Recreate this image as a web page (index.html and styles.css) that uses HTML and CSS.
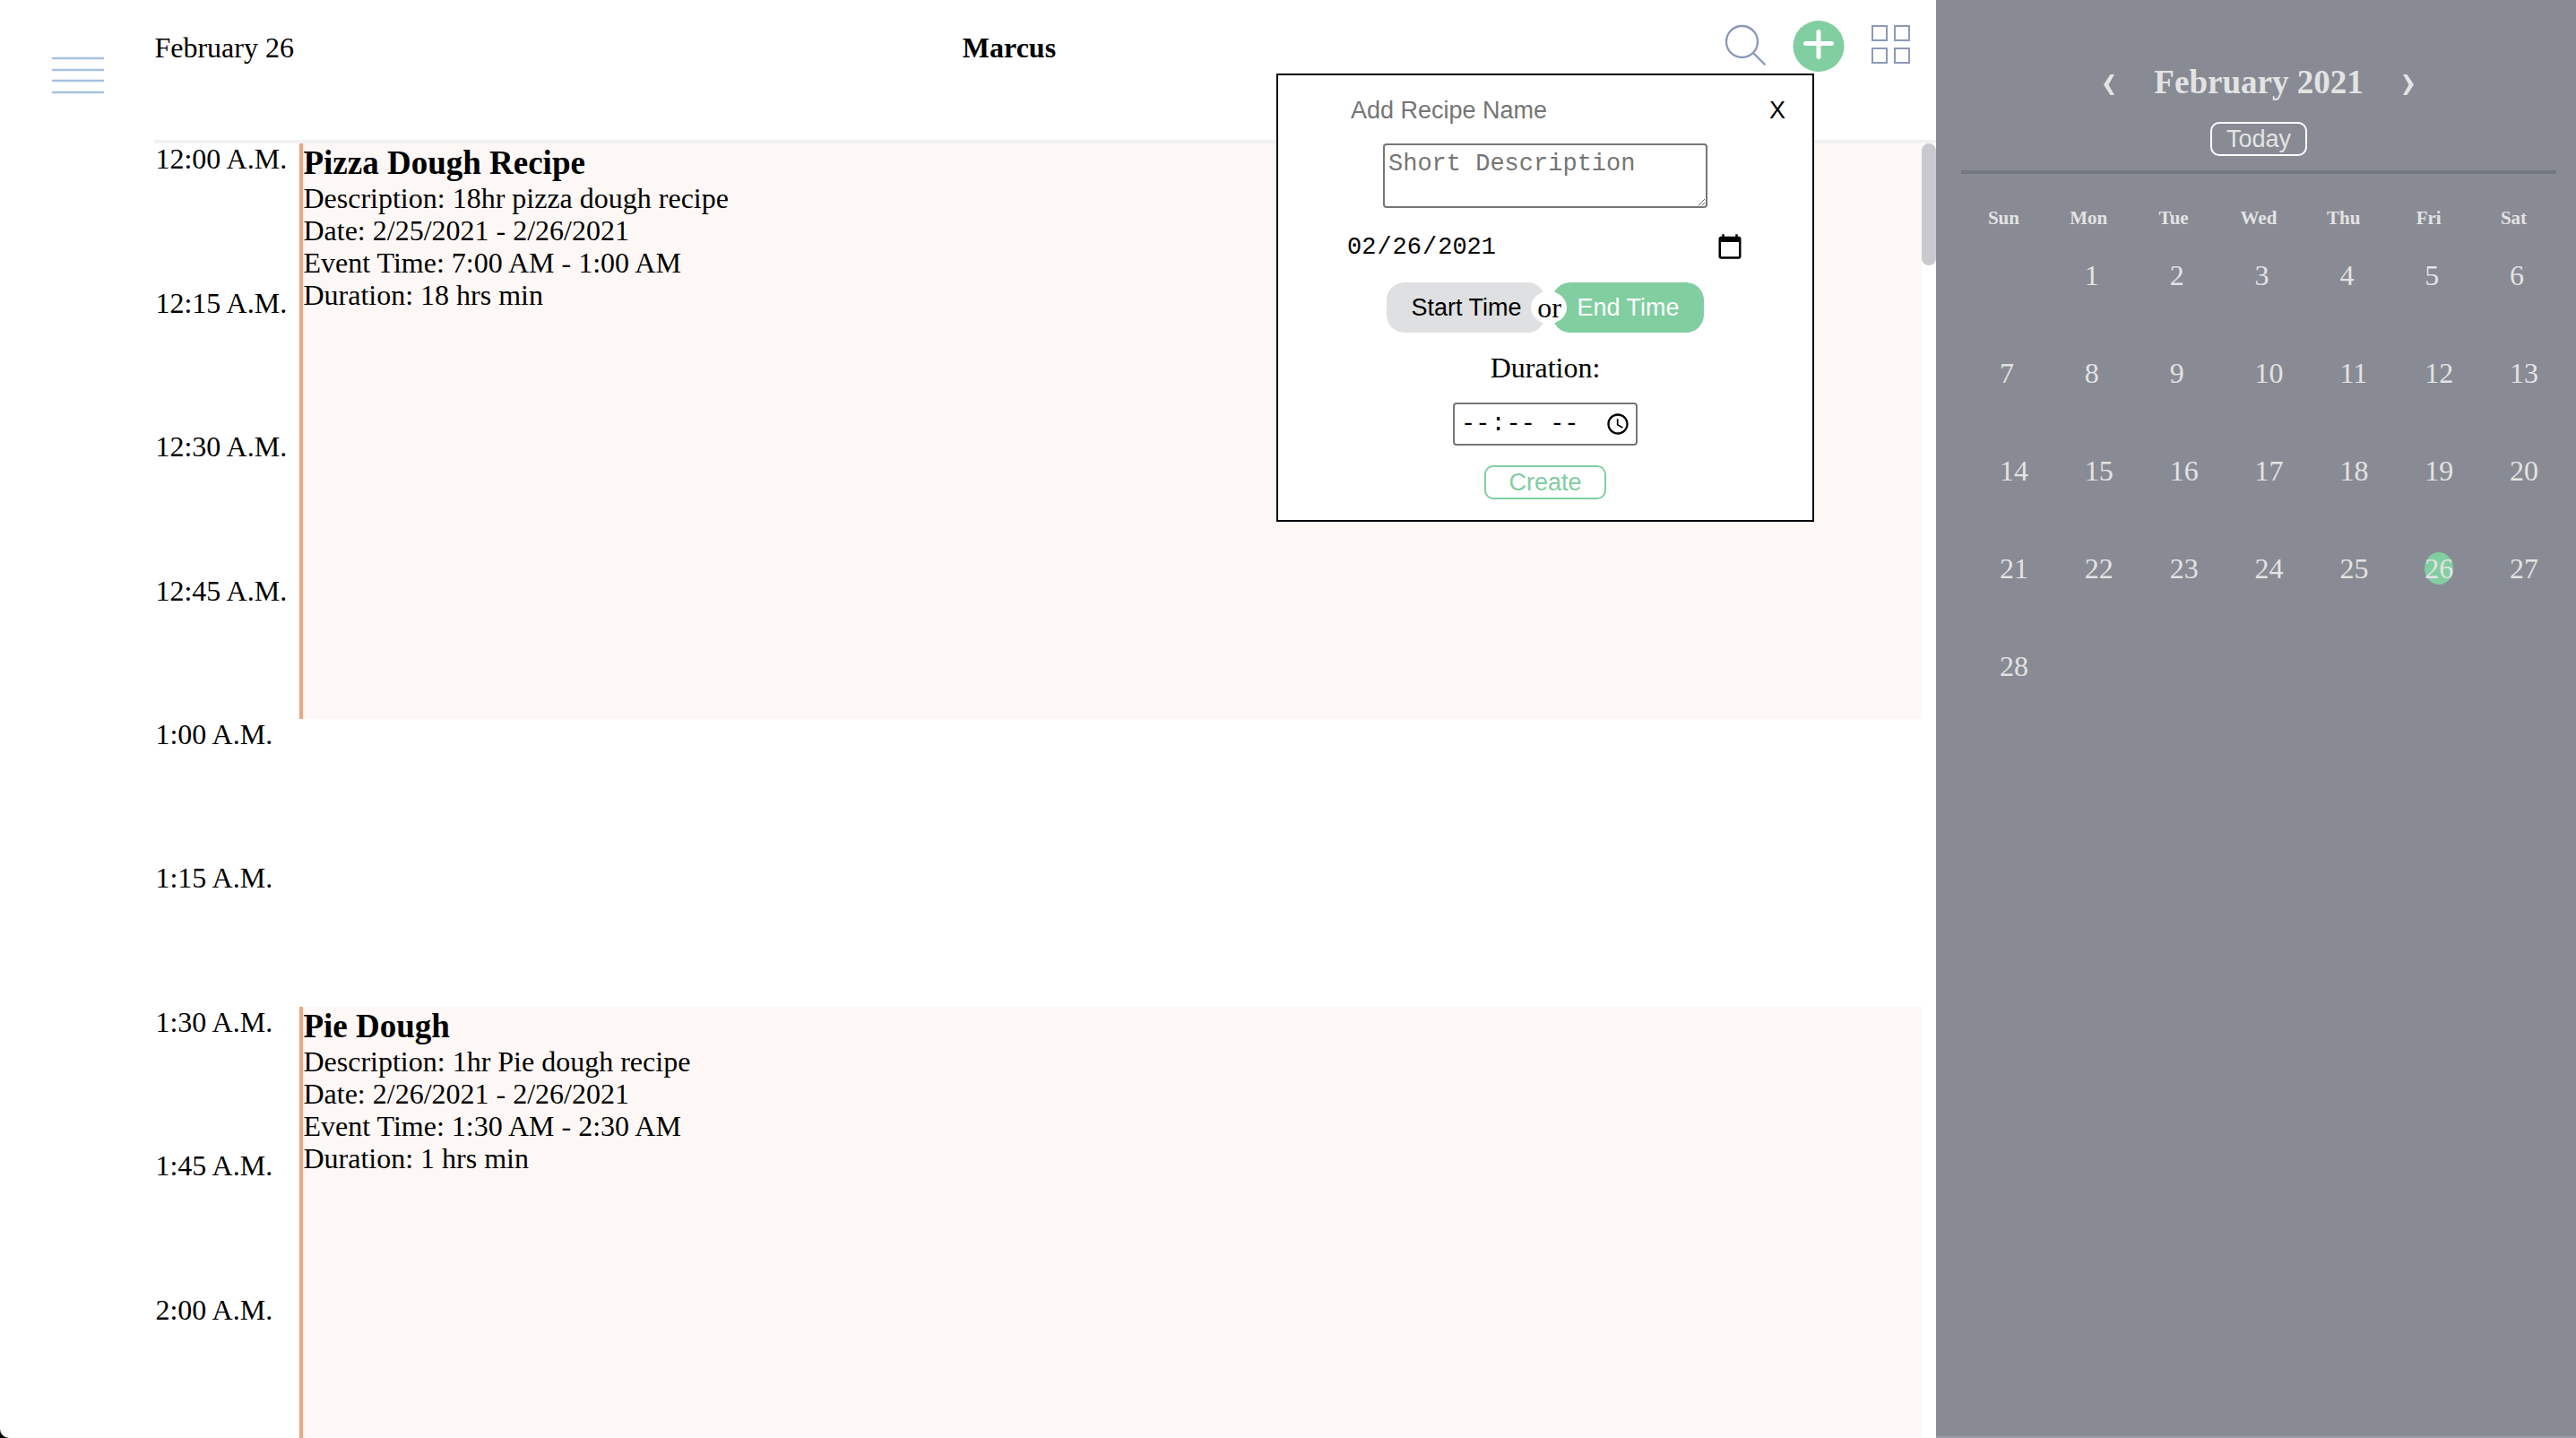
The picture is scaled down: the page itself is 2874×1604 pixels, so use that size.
FILE: index.html
```html
<!DOCTYPE html>
<html lang="en">
<head>
<meta charset="utf-8">
<title>Recipe Planner</title>
<link rel="stylesheet" href="styles.css">
</head>
<body>
<div class="app">
  <nav class="rail">
    <button class="icon-button" type="button" aria-label="Menu">
      <svg width="60" height="44" viewBox="0 0 60 44" fill="none" stroke="#a5c3e2" stroke-width="2.5" stroke-linecap="round"><path d="M2 3H58M2 16H58M2 28H58M2 41H58"/></svg>
    </button>
  </nav>

  <main class="day">
    <header class="day-header">
      <span>February 26</span>
      <strong>Marcus</strong>
      <div class="tools">
        <button class="icon-button" type="button" aria-label="Search">
          <svg width="46" height="60" viewBox="0 0 46 60" fill="none" stroke="#8b9ab9" stroke-width="2.300"><circle cx="19.500" cy="23.500" r="17.5"/><path d="M32 36L45.500 49.500"/></svg>
        </button>
        <button class="icon-button" type="button" aria-label="Add recipe">
          <svg width="58" height="60" viewBox="0 0 58 60"><circle cx="29" cy="28.500" r="28.500" fill="#81cea1"/><path d="M29 12.500V40.500M14.500 25.500H43.500" stroke="#fff" stroke-width="5" stroke-linecap="round"/></svg>
        </button>
        <button class="icon-button" type="button" aria-label="Grid view">
          <svg width="44" height="60" viewBox="0 0 44 60" fill="none" stroke="#8b9ab9" stroke-width="2"><path d="M1 6h16v16H1zM26 6h16v16H26zM1 31h16v16H1zM26 31h16v16H26z"/></svg>
        </button>
      </div>

      <form class="popover">
        <div class="popover-top">
          <input class="name-input" type="text" placeholder="Add Recipe Name" aria-label="Recipe name">
          <button class="close" type="button" aria-label="Close">X</button>
        </div>
        <textarea class="description" placeholder="Short Description" aria-label="Short description"></textarea>
        <input class="date-input" type="date" value="2021-02-26" aria-label="Date">
        <div class="time-choice">
          <button class="choice" type="button">Start Time</button>
          <span class="or">or</span>
          <button class="choice choice-on" type="button">End Time</button>
        </div>
        <label class="duration-label" for="duration">Duration:</label>
        <input class="duration-input" id="duration" type="time">
        <button class="create" type="submit">Create</button>
      </form>
    </header>

    <div class="schedule">
      <div class="slots">
        <ol class="times">
          <li>12:00 A.M.</li>
          <li>12:15 A.M.</li>
          <li>12:30 A.M.</li>
          <li>12:45 A.M.</li>
          <li>1:00 A.M.</li>
          <li>1:15 A.M.</li>
          <li>1:30 A.M.</li>
          <li>1:45 A.M.</li>
          <li>2:00 A.M.</li>
        </ol>
        <div class="events">
          <article class="event event-pizza">
            <h3>Pizza Dough Recipe</h3>
            <p>Description: 18hr pizza dough recipe</p>
            <p>Date: 2/25/2021 - 2/26/2021</p>
            <p>Event Time: 7:00 AM - 1:00 AM</p>
            <p>Duration: 18 hrs min</p>
          </article>
          <article class="event event-pie">
            <h3>Pie Dough</h3>
            <p>Description: 1hr Pie dough recipe</p>
            <p>Date: 2/26/2021 - 2/26/2021</p>
            <p>Event Time: 1:30 AM - 2:30 AM</p>
            <p>Duration: 1 hrs min</p>
          </article>
        </div>
      </div>
      <div class="scroll-track"><div class="scroll-thumb"></div></div>
    </div>
  </main>

  <aside class="month">
    <header class="month-header">
      <div class="month-nav">
        <button class="icon-button" type="button" aria-label="Previous month">
          <svg width="12" height="24" viewBox="0 0 12 24" fill="#e3e3e3"><path d="M7.500 1H12L5.500 12.500L12 24H7.500L0 12.500z"/></svg>
        </button>
        <h2>February 2021</h2>
        <button class="icon-button" type="button" aria-label="Next month">
          <svg width="12" height="24" viewBox="0 0 12 24" fill="#e3e3e3"><path d="M4.500 1H0L6.500 12.500L0 24H4.500L12 12.500z"/></svg>
        </button>
      </div>
      <button class="today" type="button">Today</button>
    </header>
    <table class="calendar">
      <thead>
        <tr><th>Sun</th><th>Mon</th><th>Tue</th><th>Wed</th><th>Thu</th><th>Fri</th><th>Sat</th></tr>
      </thead>
      <tbody>
        <tr><td></td><td>1</td><td>2</td><td>3</td><td>4</td><td>5</td><td>6</td></tr>
        <tr><td>7</td><td>8</td><td>9</td><td>10</td><td>11</td><td>12</td><td>13</td></tr>
        <tr><td>14</td><td>15</td><td>16</td><td>17</td><td>18</td><td>19</td><td>20</td></tr>
        <tr><td>21</td><td>22</td><td>23</td><td>24</td><td>25</td><td><span class="current">26</span></td><td>27</td></tr>
        <tr><td>28</td><td></td><td></td><td></td><td></td><td></td><td></td></tr>
      </tbody>
    </table>
  </aside>
</div>
</body>
</html>
```

FILE: styles.css
```css
* {
  box-sizing: border-box;
}

body {
  margin: 0;
  background: #000;
  color: #000;
  font: 32px/36px "Liberation Serif", "Times New Roman", serif;
}

h2, h3, p, ol {
  margin: 0;
  padding: 0;
}

button, input, textarea {
  margin: 0;
  font: 27px/30px "Liberation Sans", Arial, sans-serif;
}

svg {
  display: block;
}

.app {
  display: grid;
  grid-template-columns: 6% 1fr 714px;
  height: 100vh;
  overflow: hidden;
  background: #fff;
  border-bottom-left-radius: 10px;
}

.icon-button {
  padding: 0;
  border: 0;
  background: none;
}

.rail {
  padding: 62px 0 0 57px;
}

/* Day view */

.day {
  display: flex;
  flex-direction: column;
  min-height: 0;
}

.day-header {
  position: relative;
  display: flex;
  flex: none;
  justify-content: space-between;
  height: 10vh;
  padding: 23px 28px 0 0;
  border-bottom: 4px solid #f2f2f2;
  line-height: 60px;
}

.tools {
  display: flex;
  align-items: flex-start;
  gap: 30px;
}

.schedule {
  display: flex;
  flex: 1;
  min-height: 0;
  overflow: hidden;
}

.slots {
  display: grid;
  flex: 1;
  grid-template-columns: 162px 1fr;
}

.times {
  padding-left: 1px;
  line-height: 34px;
  list-style: none;
}

.times li {
  height: 10vh;
}

.events {
  display: grid;
  grid-auto-rows: 10vh;
}

.event {
  border-left: 4px solid #eda581;
  background: #fdf8f6;
}

.event h3 {
  font-size: 37px;
  line-height: 43px;
}

.event-pizza {
  grid-row: 1 / span 4;
}

.event-pie {
  grid-row: 7 / span 4;
}

.scroll-track {
  width: 16px;
}

.scroll-thumb {
  height: 136px;
  border-radius: 8px;
  background: #c9cacf;
}

/* New recipe form */

.popover {
  position: absolute;
  top: 82px;
  right: 136px;
  z-index: 1;
  display: flex;
  flex-direction: column;
  align-items: center;
  width: 600px;
  height: 500px;
  border: 2px solid #000;
  background: #fff;
  line-height: 36px;
}

.popover-top {
  display: flex;
  justify-content: space-between;
  align-self: stretch;
  padding: 22px 28px 0 79px;
}

.name-input {
  width: 400px;
  height: 34px;
  padding: 2px;
  border: 0;
}

.name-input::placeholder,
.description::placeholder {
  color: #757575;
}

.close {
  height: 34px;
  padding: 2px;
  border: 0;
  background: none;
}

.description {
  width: 362px;
  height: 72px;
  margin-top: 20px;
  padding: 6px 4px;
  border: 2px solid #767676;
  border-radius: 4px;
  font-family: "Liberation Mono", "Courier New", monospace;
}

.date-input {
  width: 448px;
  height: 42px;
  margin-top: 23px;
  padding: 2px;
  border: 0;
  background: none;
  font-family: "Liberation Mono", "Courier New", monospace;
}

.date-input::-webkit-calendar-picker-indicator,
.duration-input::-webkit-calendar-picker-indicator {
  width: 32px;
  height: 32px;
  padding: 0;
}

.duration-input::-webkit-calendar-picker-indicator {
  width: 28px;
  height: 28px;
}

.duration-input::-webkit-datetime-edit-ampm-field {
  margin-left: 6px;
}

.time-choice {
  display: flex;
  align-items: center;
  margin-top: 18px;
}

.choice {
  height: 56px;
  padding: 0 27px;
  border: 0;
  border-radius: 20px;
  background: #dfe0e2;
  color: #000;
}

.choice-on {
  background: #81cea1;
  color: #fff;
}

.or {
  z-index: 1;
  width: 40px;
  margin: 0 -16px;
  border-radius: 50%;
  background: #fff;
  text-align: center;
}

.duration-label {
  margin-top: 21px;
}

.duration-input {
  width: 206px;
  height: 48px;
  margin-top: 21px;
  padding: 2px 6px;
  border: 2px solid #767676;
  border-radius: 4px;
  background: #fff;
  font-family: "Liberation Mono", "Courier New", monospace;
}

.create,
.today {
  height: 38px;
  padding: 0;
  border: 2px solid #81cea1;
  border-radius: 10px;
  background: none;
}

.create {
  width: 136px;
  margin-top: 22px;
  color: #81cea1;
}

/* Month sidebar */

.month {
  padding: 0 22px 0 28px;
  border-bottom: 2px solid #9c9aa5;
  background: #888b94;
  color: #e3e3e3;
}

.month-header {
  display: flex;
  flex-direction: column;
  align-items: center;
  gap: 23px;
  padding: 71px 0 16px;
  border-bottom: 4px solid #747881;
}

.month-nav {
  display: flex;
  align-items: center;
  gap: 44px;
}

.month-nav .icon-button {
  padding-top: 4px;
}

.month-nav h2 {
  font-size: 37px;
  line-height: 42px;
}

.today {
  width: 108px;
  border-color: #fff;
  color: #e3e3e3;
}

.calendar {
  width: 100%;
  border-collapse: collapse;
  table-layout: fixed;
}

.calendar th {
  height: 95px;
  padding: 37px 0 0;
  font-size: 21px;
  line-height: 24px;
  vertical-align: top;
}

.calendar td {
  height: 109px;
  padding: 0 0 0 43px;
  vertical-align: top;
}

.current {
  display: inline-block;
  border-radius: 50%;
  background: #81cea1;
}
```
